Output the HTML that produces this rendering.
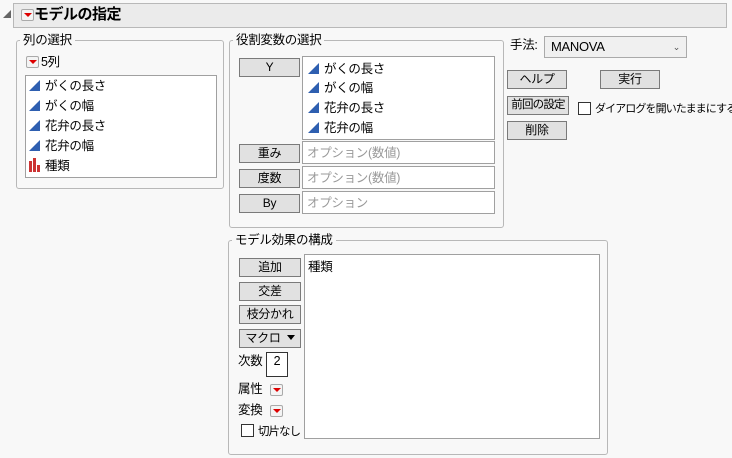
<!DOCTYPE html>
<html><head><meta charset="utf-8"><style>
*{box-sizing:border-box;margin:0;padding:0}
body{width:732px;height:458px;background:#f8f8f8;position:relative;overflow:hidden;font-family:"Liberation Sans","Noto Sans CJK JP",sans-serif;font-size:12.5px;color:#000;letter-spacing:-0.3px}
.a{position:absolute}
.grp{position:absolute;border:1px solid #b8b8b8;border-radius:3px}
.leg{position:absolute;background:#f8f8f8;padding:0 3px;font-size:12.5px;line-height:14px}
.box{position:absolute;background:#fff;border:1px solid #a0a0a0}
.btn{position:absolute;background:#e1e1e1;border:1px solid #7a7a7a;text-align:center;font-size:12px;line-height:16px}
.rb{position:absolute;width:13px;height:12px;border:1px solid #aaa;background:#f4f4f4;border-radius:2px}
.rb:after{content:"";position:absolute;left:2px;top:3px;border-left:4px solid transparent;border-right:4px solid transparent;border-top:4px solid #d00}
.it{position:absolute;line-height:16px;white-space:nowrap}
.tri{display:inline-block;width:0;height:0;border-left:11px solid transparent;border-bottom:11px solid #2e5fb0;vertical-align:-1px;margin-right:5px}
.ph{color:#999}
.cb{position:absolute;width:13px;height:13px;border:1px solid #333;background:#fff}
</style></head><body>
<div class="a" style="left:3px;top:10px;width:0;height:0;border-left:8px solid transparent;border-bottom:8px solid #666"></div>
<div class="a" style="left:13px;top:3px;width:714px;height:25px;background:#ebebeb;border:1px solid #b8b8b8"></div>
<div class="rb" style="left:21px;top:9px"></div>
<div class="a" style="left:34px;top:5px;font-size:15px;font-weight:bold;line-height:20px;letter-spacing:-0.5px">モデルの指定</div>

<div class="grp" style="left:16px;top:40px;width:208px;height:149px"></div>
<div class="leg" style="left:20px;top:33px">列の選択</div>
<div class="rb" style="left:26px;top:56px"></div>
<div class="it" style="left:41px;top:54px">5列</div>
<div class="box" style="left:25px;top:75px;width:192px;height:103px"></div>
<div class="it" style="left:29px;top:78px"><span class="tri"></span>がくの長さ</div>
<div class="it" style="left:29px;top:98px"><span class="tri"></span>がくの幅</div>
<div class="it" style="left:29px;top:118px"><span class="tri"></span>花弁の長さ</div>
<div class="it" style="left:29px;top:138px"><span class="tri"></span>花弁の幅</div>
<div class="a" style="left:29px;top:161px;width:3px;height:11px;background:#c33"></div>
<div class="a" style="left:33px;top:158px;width:3px;height:14px;background:#c33"></div>
<div class="a" style="left:37px;top:165px;width:3px;height:7px;background:#c33"></div>
<div class="it" style="left:45px;top:158px">種類</div>

<div class="grp" style="left:229px;top:40px;width:275px;height:188px"></div>
<div class="leg" style="left:233px;top:33px">役割変数の選択</div>
<div class="btn" style="left:239px;top:58px;width:61px;height:19px">Y</div>
<div class="box" style="left:302px;top:56px;width:193px;height:84px"></div>
<div class="it" style="left:308px;top:61px"><span class="tri"></span>がくの長さ</div>
<div class="it" style="left:308px;top:80px"><span class="tri"></span>がくの幅</div>
<div class="it" style="left:308px;top:100px"><span class="tri"></span>花弁の長さ</div>
<div class="it" style="left:308px;top:120px"><span class="tri"></span>花弁の幅</div>
<div class="btn" style="left:239px;top:144px;width:61px;height:19px">重み</div>
<div class="box" style="left:302px;top:141px;width:193px;height:23px"></div>
<div class="it ph" style="left:307px;top:145px">オプション(数値)</div>
<div class="btn" style="left:239px;top:169px;width:61px;height:19px">度数</div>
<div class="box" style="left:302px;top:166px;width:193px;height:23px"></div>
<div class="it ph" style="left:307px;top:170px">オプション(数値)</div>
<div class="btn" style="left:239px;top:194px;width:61px;height:19px">By</div>
<div class="box" style="left:302px;top:191px;width:193px;height:23px"></div>
<div class="it ph" style="left:307px;top:195px">オプション</div>

<div class="it" style="left:510px;top:37px">手法:</div>
<div class="a" style="left:544px;top:36px;width:143px;height:22px;background:#f0f0f0;border:1px solid #aaa;line-height:20px;padding-left:6px;font-size:13px">MANOVA<span style="position:absolute;right:6px;top:0;font-size:9px;color:#555">&#8964;</span></div>
<div class="btn" style="left:507px;top:70px;width:60px;height:19px">ヘルプ</div>
<div class="btn" style="left:600px;top:70px;width:60px;height:19px">実行</div>
<div class="btn" style="left:507px;top:96px;width:62px;height:19px;letter-spacing:-0.8px;font-size:11.5px">前回の設定</div>
<div class="cb" style="left:578px;top:102px"></div>
<div class="it" style="left:595px;top:101px;font-size:11px;letter-spacing:-0.9px">ダイアログを開いたままにする</div>
<div class="btn" style="left:507px;top:121px;width:60px;height:19px">削除</div>

<div class="grp" style="left:228px;top:240px;width:380px;height:215px"></div>
<div class="leg" style="left:232px;top:233px">モデル効果の構成</div>
<div class="box" style="left:304px;top:254px;width:296px;height:185px"></div>
<div class="it" style="left:308px;top:259px">種類</div>
<div class="btn" style="left:239px;top:258px;width:62px;height:19px">追加</div>
<div class="btn" style="left:239px;top:282px;width:62px;height:19px">交差</div>
<div class="btn" style="left:239px;top:305px;width:62px;height:19px">枝分かれ</div>
<div class="btn" style="left:239px;top:329px;width:62px;height:19px">マクロ <span style="display:inline-block;border-left:4px solid transparent;border-right:4px solid transparent;border-top:5px solid #000;vertical-align:2px;margin-left:3px"></span></div>
<div class="it" style="left:238px;top:353px">次数</div>
<div class="a" style="left:266px;top:352px;width:22px;height:25px;background:#fff;border:1px solid #333;text-align:center;line-height:16px">2</div>
<div class="it" style="left:238px;top:381px">属性</div>
<div class="rb" style="left:270px;top:384px"></div>
<div class="it" style="left:238px;top:402px">変換</div>
<div class="rb" style="left:270px;top:405px"></div>
<div class="cb" style="left:241px;top:424px"></div>
<div class="it" style="left:258px;top:424px;letter-spacing:-1px;font-size:11.5px">切片なし</div>
</body></html>
